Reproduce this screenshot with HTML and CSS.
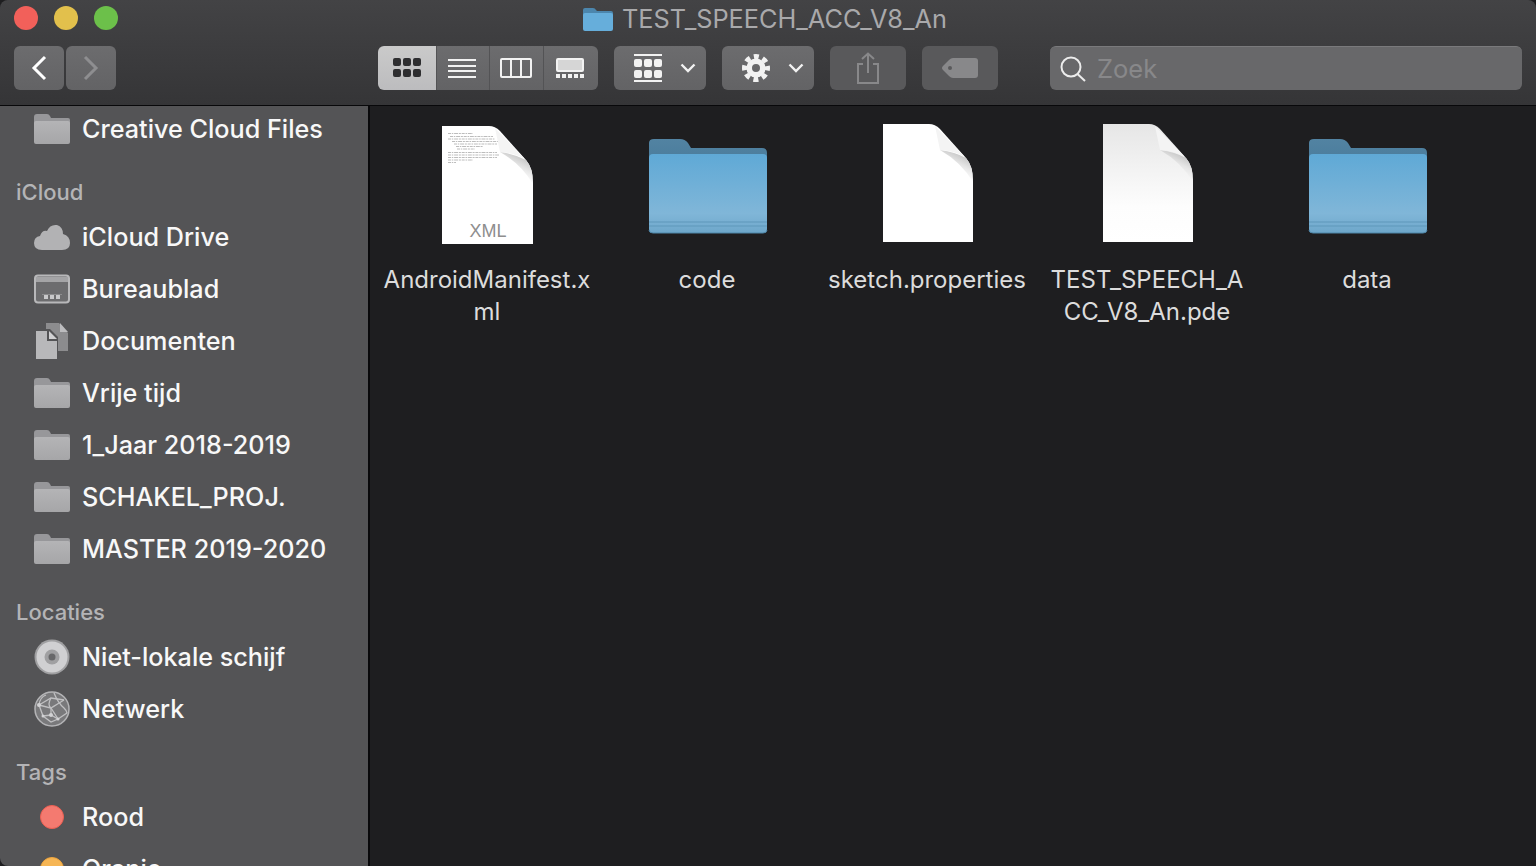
FILE: index.html
```html
<!DOCTYPE html>
<html lang="nl">
<head>
<meta charset="utf-8">
<title>TEST_SPEECH_ACC_V8_An</title>
<link rel="stylesheet" href="styles.css">
</head>
<body>
<svg class="defs" aria-hidden="true">
  <defs>
    <linearGradient id="gFront" x1="0" y1="0" x2="0" y2="1"><stop offset="0" stop-color="#5fa9d6"/><stop offset=".75" stop-color="#80b6d8"/><stop offset="1" stop-color="#6ea7ca"/></linearGradient>
    <linearGradient id="gBack" x1="0" y1="0" x2="0" y2="1"><stop offset="0" stop-color="#5283a2"/><stop offset="1" stop-color="#487a9a"/></linearGradient>
    <linearGradient id="gPage" x1="0" y1="0" x2="0" y2="1"><stop offset="0" stop-color="#e6e6e6"/><stop offset=".7" stop-color="#fdfdfd"/><stop offset="1" stop-color="#fff"/></linearGradient>
    <linearGradient id="gShade" x1="1" y1="0" x2="0.500" y2="1"><stop offset="0" stop-color="#a8a8a8"/><stop offset=".5" stop-color="#e4e4e4"/><stop offset="1" stop-color="#fff" stop-opacity="0"/></linearGradient>
    <linearGradient id="gSide" x1="0" y1="0" x2="0" y2="1"><stop offset="0" stop-color="#b4b4b6"/><stop offset="1" stop-color="#a6a6a8"/></linearGradient>
    <symbol id="page" viewBox="0 0 128 128">
      <path d="M20 6H66Q72 6 77 11L103 40Q110 48 110 62V124H20Z" fill="#fff"/>
    </symbol>
    <symbol id="fold" viewBox="0 0 128 128">
      <path d="M77 32Q92 34 103 40Q110 48 110 64Q98 44 77 32Z" fill="url(#gShade)"/>
      <path d="M72 8L77 32Q92 33 102 39Z" fill="#f4f4f4"/>
    </symbol>
    <symbol id="folder" viewBox="0 0 128 128">
      <path d="M6 25Q6 21 11 21H37Q42 21 45 25L48 30H119Q124 30 124 35V50H6Z" fill="url(#gBack)"/>
      <rect x="6" y="36" width="118" height="79" rx="4" fill="url(#gFront)"/>
      <path d="M6 104H124M6 108H124" stroke="#5f97ba" stroke-width="1"/>
      <path d="M6 112Q6 115 10 115H120Q124 115 124 112" fill="none" stroke="#4f86a8" stroke-width="1"/>
    </symbol>
    <symbol id="sfolder" viewBox="0 0 36 30">
      <path d="M0 3Q0 0 3 0H13Q15 0 16 2L17 4H34Q36 4 36 6V12H0Z" fill="#97979a"/>
      <path d="M0 9Q0 7 2 7H34Q36 7 36 9V28Q36 30 34 30H2Q0 30 0 28Z" fill="url(#gSide)"/>
    </symbol>
  </defs>
</svg>
<div class="window">
  <header class="titlebar">
    <div class="titlerow">
      <div class="lights">
        <span class="light red"></span>
        <span class="light yellow"></span>
        <span class="light green"></span>
      </div>
      <div class="title">
        <svg class="title-icon" viewBox="0 0 30 24"><path d="M0 3Q0 1 2 1H10Q12 1 13 3L14 4H28Q30 4 30 6V10H0Z" fill="#4c86ad"/><rect y="6" width="30" height="18" rx="2" fill="#66aedb"/></svg>
        <span class="title-text">TEST_SPEECH_ACC_V8_An</span>
      </div>
    </div>
    <div class="toolbar">
      <div class="nav">
        <button class="btn nav-btn"><svg width="16" height="26" viewBox="0 0 16 26"><path d="M14 2L3 13L14 24" fill="none" stroke="#fff" stroke-width="3"/></svg></button>
        <button class="btn nav-btn"><svg width="16" height="26" viewBox="0 0 16 26"><path d="M2 2L13 13L2 24" fill="none" stroke="#8e8e90" stroke-width="3"/></svg></button>
      </div>
      <div class="views">
        <div class="view selected">
          <svg width="28" height="20" viewBox="0 0 28 20" fill="#2e2e30"><rect width="8" height="8" rx="2"/><rect x="10" width="8" height="8" rx="2"/><rect x="20" width="8" height="8" rx="2"/><rect y="11" width="8" height="8" rx="2"/><rect x="10" y="11" width="8" height="8" rx="2"/><rect x="20" y="11" width="8" height="8" rx="2"/></svg>
        </div>
        <div class="view w-list">
          <svg width="28" height="20" viewBox="0 0 28 20" fill="#f2f2f2"><rect width="28" height="2" y="1"/><rect width="28" height="2" y="7"/><rect width="28" height="2" y="12"/><rect width="28" height="2" y="18"/></svg>
        </div>
        <div class="view w-col">
          <svg width="32" height="20" viewBox="0 0 32 20" fill="none" stroke="#f2f2f2" stroke-width="2"><rect x="1" y="1" width="30" height="18" rx="1"/><path d="M11 1V19M21 1V19"/></svg>
        </div>
        <div class="view w-gal">
          <svg width="28" height="20" viewBox="0 0 28 20"><rect x="1" y="1" width="26" height="12" rx="1" fill="#d6d6d6" stroke="#f2f2f2" stroke-width="2"/><g fill="#f2f2f2"><rect y="16" width="4" height="4"/><rect x="6" y="16" width="4" height="4"/><rect x="12" y="16" width="4" height="4"/><rect x="18" y="16" width="4" height="4"/><rect x="24" y="16" width="4" height="4"/></g></svg>
        </div>
      </div>
      <button class="btn drop arrange">
        <svg width="28" height="28" viewBox="0 0 28 28" fill="#f2f2f2"><rect width="28" height="2"/><rect y="26" width="28" height="2"/><rect y="5" width="8" height="8" rx="2"/><rect x="10" y="5" width="8" height="8" rx="2"/><rect x="20" y="5" width="8" height="8" rx="2"/><rect y="16" width="8" height="8" rx="2"/><rect x="10" y="16" width="8" height="8" rx="2"/><rect x="20" y="16" width="8" height="8" rx="2"/></svg>
        <svg class="chev" width="16" height="10" viewBox="0 0 16 10"><path d="M1.500 1.500L8 8L14.500 1.500" fill="none" stroke="#f2f2f2" stroke-width="2.400"/></svg>
      </button>
      <button class="btn drop action">
        <svg width="28" height="28" viewBox="0 0 28 28"><circle cx="14" cy="14" r="11.500" fill="none" stroke="#f2f2f2" stroke-width="5" stroke-dasharray="5 4.030" stroke-dashoffset="2.500"/><circle cx="14" cy="14" r="6.800" fill="none" stroke="#f2f2f2" stroke-width="5.600"/></svg>
        <svg class="chev" width="16" height="10" viewBox="0 0 16 10"><path d="M1.500 1.500L8 8L14.500 1.500" fill="none" stroke="#f2f2f2" stroke-width="2.400"/></svg>
      </button>
      <button class="btn dim share">
        <svg width="24" height="32" viewBox="0 0 24 32" fill="none" stroke="#88888a" stroke-width="2"><path d="M7 12H2V31H22V12H17"/><path d="M12 21V2M6 7L12 1.500L18 7"/></svg>
      </button>
      <button class="btn dim tag">
        <svg width="36" height="20" viewBox="0 0 36 20"><path d="M11 0H33Q36 0 36 3V17Q36 20 33 20H11Q9 20 7 18L1 12Q-1 10 1 8L7 2Q9 0 11 0Z" fill="#88888a"/><circle cx="8" cy="10" r="2" fill="#59595b"/></svg>
      </button>
      <div class="search">
        <svg width="26" height="26" viewBox="0 0 26 26" fill="none" stroke="#ececec" stroke-width="2"><circle cx="11" cy="11" r="9.500"/><path d="M17.500 18L25 25"/></svg>
        <span>Zoek</span>
      </div>
    </div>
  </header>
  <div class="main">
    <aside class="sidebar">
      <div class="list">
        <div class="row"><svg class="ic" viewBox="0 0 36 30"><use href="#sfolder"/></svg><span>Creative Cloud Files</span></div>
        <h2 class="head">iCloud</h2>
        <div class="row"><svg class="ic" viewBox="0 0 36 30"><path d="M8 28Q0 28 0 21Q0 15 6 14Q8 8 13 9Q16 2 23 3Q29 5 29 12Q36 14 36 21Q36 28 28 28Z" fill="#b2b2b4"/></svg><span>iCloud Drive</span></div>
        <div class="row"><svg class="ic" viewBox="0 0 36 30"><rect x="1" y="1.500" width="34" height="27" rx="3" fill="#6c6c6e" stroke="#b8b8ba" stroke-width="2"/><rect x="2" y="3" width="32" height="5" fill="#a4a4a6"/><g fill="#c8c8ca"><rect x="10" y="21" width="4" height="4"/><rect x="16" y="21" width="4" height="4"/><rect x="22" y="21" width="4" height="4"/></g><rect x="8" y="20" width="20" height="1" fill="#8c8c8e"/></svg><span>Bureaublad</span></div>
        <div class="row"><svg class="ic" viewBox="0 0 36 36"><path d="M12 0H25L34 10V28H24V14L16 6H12Z" fill="#8c8c8e"/><path d="M26 0L34 9H26Z" fill="#bcbcbe"/><path d="M2 8H13V18H23V36H2Z" fill="#b8b8ba"/><path d="M15 8L23 16H15Z" fill="#d0d0d2"/></svg><span>Documenten</span></div>
        <div class="row"><svg class="ic" viewBox="0 0 36 30"><use href="#sfolder"/></svg><span>Vrije tijd</span></div>
        <div class="row"><svg class="ic" viewBox="0 0 36 30"><use href="#sfolder"/></svg><span>1_Jaar 2018-2019</span></div>
        <div class="row"><svg class="ic" viewBox="0 0 36 30"><use href="#sfolder"/></svg><span>SCHAKEL_PROJ.</span></div>
        <div class="row"><svg class="ic" viewBox="0 0 36 30"><use href="#sfolder"/></svg><span>MASTER 2019-2020</span></div>
        <h2 class="head">Locaties</h2>
        <div class="row"><svg class="ic" viewBox="0 0 36 36"><circle cx="18" cy="18" r="17.500" fill="#a0a0a2"/><circle cx="18" cy="18" r="15.500" fill="#d0d0d2"/><circle cx="18" cy="18" r="7.500" fill="#a0a0a2"/><circle cx="18" cy="18" r="3.500" fill="#68686a"/></svg><span>Niet-lokale schijf</span></div>
        <div class="row"><svg class="ic" viewBox="0 0 36 36"><circle cx="18" cy="18" r="17" fill="#79797b" stroke="#b4b4b6" stroke-width="1.500"/><g fill="none" stroke="#c0c0c2" stroke-width="1.300"><path d="M5 14L17 7L30 9"/><path d="M5 14L9 25L17 31L24 28L17 17L5 14"/><path d="M17 7Q13 14 17 17Q22 14 30 9"/><path d="M9 25L17 24L24 28L33 22"/><path d="M17 17L17 24"/><path d="M20 2Q24 12 30 17Q33 20 33 22"/><path d="M5 14Q6 6 12 4"/></g><g fill="#d2d2d4"><circle cx="5" cy="14" r="2"/><circle cx="17" cy="24" r="2"/><circle cx="9" cy="25" r="1.500"/><circle cx="24" cy="28" r="1.500"/></g></svg><span>Netwerk</span></div>
        <h2 class="head">Tags</h2>
        <div class="row"><span class="dot rood"></span><span>Rood</span></div>
        <div class="row"><span class="dot oranje"></span><span>Oranje</span></div>
      </div>
    </aside>
    <section class="files">
      <figure class="file">
        <svg class="big lower" viewBox="0 0 128 128">
          <path d="M19 6H66Q72 6 77 11L103 40Q110 48 110 62V124H19Z" fill="#fff"/>
          <g fill="none" stroke="#b4b4b4" stroke-width=".9" stroke-dasharray="3 .8 1.500 .8 4 .8 2 .8">
            <path d="M25 13.500H50M27 16.500H70M25 19H72M29 21.500H76M31 24H74M33 26.500H60M34 29H52M25 32.500H74M25 35H76M25 37.500H74M25 40H50M25 42.500H33"/>
          </g>
          <use href="#fold"/>
          <text class="xml" x="65" y="117">XML</text>
        </svg>
        <figcaption>AndroidManifest.x<br>ml</figcaption>
      </figure>
      <figure class="file">
        <svg class="big" viewBox="0 0 128 128"><use href="#folder"/></svg>
        <figcaption>code</figcaption>
      </figure>
      <figure class="file">
        <svg class="big" viewBox="0 0 128 128"><use href="#page"/><use href="#fold"/></svg>
        <figcaption>sketch.properties</figcaption>
      </figure>
      <figure class="file">
        <svg class="big" viewBox="0 0 128 128">
          <path d="M20 6H66Q72 6 77 11L103 40Q110 48 110 62V124H20Z" fill="url(#gPage)"/>
          <use href="#fold"/>
        </svg>
        <figcaption>TEST_SPEECH_A<br>CC_V8_An.pde</figcaption>
      </figure>
      <figure class="file">
        <svg class="big" viewBox="0 0 128 128"><use href="#folder"/></svg>
        <figcaption>data</figcaption>
      </figure>
    </section>
  </div>
</div>
</body>
</html>
```
FILE: styles.css
```css
* { box-sizing: border-box; }
html, body { margin: 0; height: 100%; background: #1e1e20; overflow: hidden; }
body { font-family: "Inter", "Liberation Sans", sans-serif; }
.defs { position: absolute; width: 0; height: 0; }

.window { display: flex; flex-direction: column; height: 866px; overflow: hidden; border-radius: 8px; }

.titlebar { height: 106px; flex: none; border-bottom: 1px solid #08080a; background: linear-gradient(180deg, #434345 0%, #353537 100%); }
.titlerow { display: flex; height: 46px; align-items: flex-start; }
.lights { display: flex; gap: 16px; padding: 6px 0 0 14px; }
.light { width: 24px; height: 24px; border-radius: 50%; }
.red { background: #f2605a; }
.yellow { background: #e2c04c; }
.green { background: #6cc04a; }
.title { display: flex; align-items: center; height: 38px; margin-left: 465px; gap: 9px; color: #a9a9ab; font-size: 25.300px; }
.title-icon { width: 30px; height: 24px; }
.title-text { margin-top: -2px; }

.toolbar { display: flex; align-items: flex-start; padding-left: 14px; }
.btn { display: flex; align-items: center; justify-content: center; height: 44px; padding: 0; border: 0; border-radius: 6px; background: linear-gradient(180deg, #6c6c6e, #636365); }
.nav { display: flex; gap: 2px; }
.nav-btn { width: 50px; }
.views { display: flex; height: 44px; width: 220px; margin-left: 262px; border-radius: 6px; overflow: hidden; }
.view { display: flex; align-items: center; justify-content: center; padding-right: 2px; background: linear-gradient(180deg, #6c6c6e, #636365); border-left: 1px solid #535355; }
.view.selected { width: 58px; padding-right: 0; border-left: 0; background: linear-gradient(180deg, #cacaca, #bcbcbe); }
.w-list { width: 53px; }
.w-col { width: 54px; }
.w-gal { width: 55px; }
.drop { width: 92px; margin-left: 16px; justify-content: flex-start; padding-left: 20px; }
.chev { margin-left: 18px; }
.dim { width: 76px; background: #59595b; }
.share { margin-left: 16px; }
.tag { margin-left: 16px; }
.search { display: flex; align-items: center; width: 472px; height: 44px; margin-left: 52px; padding-left: 10px; gap: 10px; border-radius: 6px; background: #68686a; border-top: 1px solid #7a7a7c; color: #88888a; font-size: 25.500px; }
.search span { margin-left: 1px; }

.main { flex: 1; display: flex; min-height: 0; }
.sidebar { width: 370px; flex: none; background: #545456; border-right: 2px solid #09090b; overflow: hidden; color: #f8f8f8; }
.list { margin-top: -3px; }
.row { display: flex; align-items: center; height: 52px; padding-left: 34px; gap: 12px; font-size: 25.200px; font-weight: 500; white-space: nowrap; }
.ic { width: 36px; height: 36px; flex: none; }
.head { display: flex; align-items: center; height: 38px; margin: 18px 0 0; padding-left: 16px; font-size: 22px; font-weight: 500; color: #b4b4b6; }
.dot { width: 24px; height: 24px; margin: 0 6px; border-radius: 50%; flex: none; }
.rood { background: #f47a70; border: 1px solid #ee5f52; }
.oranje { background: #f6b655; border: 1px solid #efa53c; }

.files { flex: 1; display: grid; grid-template-columns: repeat(5, 220px); align-content: start; padding: 12px 0 0 7px; background: #1e1e20; }
.file { display: flex; flex-direction: column; align-items: center; margin: 0; }
.big { width: 128px; height: 128px; display: block; }
.lower { margin-top: 2px; margin-bottom: -2px; }
.file figcaption { margin-top: 18px; font-size: 24px; line-height: 32px; text-align: center; color: #dcdcdc; white-space: nowrap; }
.xml { font-family: "Liberation Sans", sans-serif; font-size: 18px; fill: #8e8e8e; text-anchor: middle; }
```
